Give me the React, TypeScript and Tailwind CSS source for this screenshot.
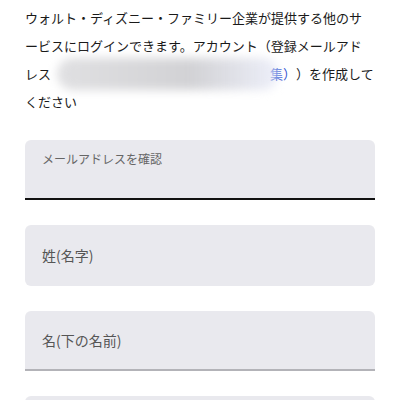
import React from 'react'

const font = { fontFamily: '"Noto Sans CJK JP", "Liberation Sans", sans-serif' }

function Field({ label, small, variant }: { label: string; small?: boolean; variant: 'focus' | 'plain' | 'line' }) {
  const base = 'w-full bg-[#e9e9ee] px-[17px]'
  if (variant === 'focus') {
    return (
      <div className={`${base} h-[60px] rounded-t-md border-b-2 border-[#111]`}>
        <div className={`pt-[10px] ${small ? 'text-[12px]' : 'text-[14px]'} leading-[18px] text-[#666]`}>{label}</div>
      </div>
    )
  }
  if (variant === 'plain') {
    return (
      <div className={`${base} flex h-[61px] items-center rounded-md`}>
        <span className="text-[14px] text-[#555]">{label}</span>
      </div>
    )
  }
  return (
    <div className={`${base} flex h-[60px] items-center rounded-t-md border-b-2 border-[#b3b3b8]`}>
      <span className="text-[14px] text-[#555]">{label}</span>
    </div>
  )
}

export default function App() {
  return (
    <div className="h-[400px] w-[400px] overflow-hidden bg-white [text-spacing-trim:space-all]" style={font}>
      <div className="px-[25px] pt-1 text-[13px] leading-[28px] text-[#1a1a1a]">
        <div className="whitespace-nowrap">ウォルト・ディズニー・ファミリー企業が提供する他のサ</div>
        <div className="whitespace-nowrap">ービスにログインできます。アカウント（登録メールアド</div>
        <div className="relative whitespace-nowrap">
          レス
          <span className="inline-block w-[219px]" />
          <span className="text-[#2c4fd0]">集）</span>）を作成して
          <div className="absolute left-[32px] top-[-2px] h-[32px] w-[222px] rounded-full bg-gradient-to-r from-[#e0e0e2] via-[#d2d2d5] via-60% to-[#e6e9f8]/70 blur-[5px]" />
        </div>
        <div>ください</div>
      </div>

      <div className="mt-6 flex flex-col gap-[25px] px-[25px]">
        <Field label="メールアドレスを確認" small variant="focus" />
        <Field label="姓(名字)" variant="plain" />
        <Field label="名(下の名前)" variant="line" />
        <div className="h-[60px] w-full rounded-t-md bg-[#e9e9ee]" />
      </div>
    </div>
  )
}
